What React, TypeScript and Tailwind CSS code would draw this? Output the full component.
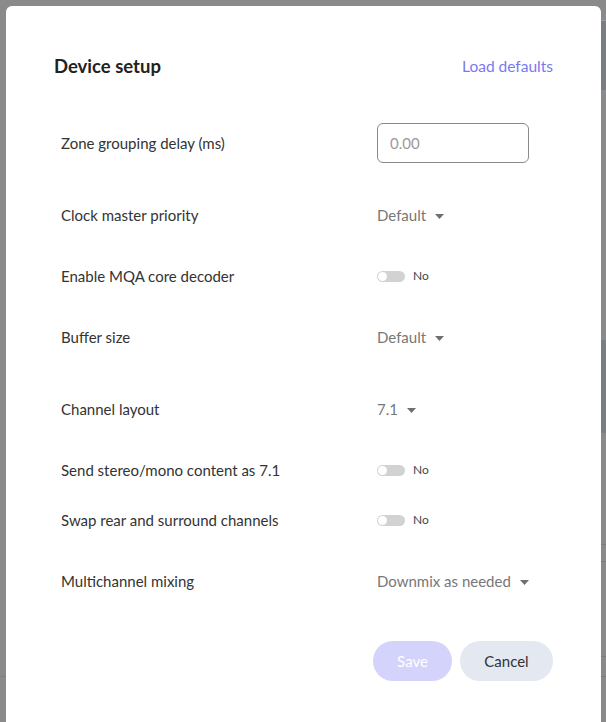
import React from "react";

type Row =
  | { kind: "input"; label: string; value: string }
  | { kind: "select"; label: string; value: string }
  | { kind: "toggle"; label: string; value: string };

const rows: Row[] = [
  { kind: "input", label: "Zone grouping delay (ms)", value: "0.00" },
  { kind: "select", label: "Clock master priority", value: "Default" },
  { kind: "toggle", label: "Enable MQA core decoder", value: "No" },
  { kind: "select", label: "Buffer size", value: "Default" },
  { kind: "select", label: "Channel layout", value: "7.1" },
  { kind: "toggle", label: "Send stereo/mono content as 7.1", value: "No" },
  { kind: "toggle", label: "Swap rear and surround channels", value: "No" },
  { kind: "select", label: "Multichannel mixing", value: "Downmix as needed" },
];

const Caret = () => (
  <svg width="9" height="5" viewBox="0 0 9 5" className="ml-[9px] mt-[2px]">
    <path d="M0 0h9L4.5 5z" fill="#6f6f6f" />
  </svg>
);

const Toggle = ({ label }: { label: string }) => (
  <div className="flex items-center">
    <div className="relative h-[11px] w-[28px] rounded-full bg-[#d2d2d2]">
      <span className="absolute left-[1px] top-[1px] h-[9px] w-[9px] rounded-full bg-white" />
    </div>
    <span className="ml-[8px] text-[12px] text-[#444]">{label}</span>
  </div>
);

const Control = ({ row }: { row: Row }) => {
  if (row.kind === "input") {
    return (
      <div className="flex h-[40px] w-[152px] items-center rounded-[6px] border border-[#8a8a8a] pl-[12px] text-[15px] text-[#9a9a9a]">
        {row.value}
      </div>
    );
  }
  if (row.kind === "toggle") return <Toggle label={row.value} />;
  return (
    <div className="flex items-center text-[15px] text-[#777]">
      {row.value}
      <Caret />
    </div>
  );
};

export default function App() {
  return (
    <div
      className="flex h-[722px] w-[606px] overflow-hidden bg-[#8a8a8a]"
      style={{ fontFamily: "Lato, 'Noto Sans', sans-serif" }}
    >
      {/* left gutter of the page behind the overlay */}
      <div className="flex w-[6px] flex-col">
        <div className="h-[676px]" />
        <div className="h-px bg-[#7e7e7e]" />
      </div>

      {/* Dialog */}
      <div className="mt-[6px] flex w-[595px] flex-col rounded-t-[6px] bg-white px-[48px]">
        <div className="mt-[41px] flex h-[40px] items-center justify-between">
          <h2 className="text-[18.5px] font-bold text-[#222]">Device setup</h2>
          <button className="text-[15.5px] text-[#7a78f2]">Load defaults</button>
        </div>

        <div className="mt-[20px] flex flex-col pl-[7px]">
          {rows.map((row) => (
            <div
              key={row.label}
              className={`flex items-center ${row.kind === "toggle" ? "h-[50px]" : "h-[72px]"}`}
            >
              <div className="w-[316px] text-[15px] text-[#333]">{row.label}</div>
              <Control row={row} />
            </div>
          ))}
        </div>

        <div className="mt-[24px] flex justify-end gap-[8px]">
          <button className="h-[40px] w-[79px] rounded-full bg-[#d4d3fc] text-[15px] text-white">
            Save
          </button>
          <button className="h-[40px] w-[93px] rounded-full bg-[#e4e8f1] text-[15px] text-[#333]">
            Cancel
          </button>
        </div>
      </div>

      {/* right gutter */}
      <div className="flex w-[5px] flex-col">
        <div className="h-[20px]" />
        <div className="h-px bg-[#9a9a9a]" />
        <div className="h-[69px] bg-[#7a7d82]" />
        <div className="h-[250px]" />
        <div className="h-[93px] bg-[#7a7d82]" />
        <div className="h-[111px]" />
        <div className="h-px bg-[#7c7c7c]" />
        <div className="h-[16px]" />
        <div className="h-px bg-[#7c7c7c]" />
        <div className="h-[94px]" />
        <div className="h-px bg-[#7c7c7c]" />
        <div className="h-[19px]" />
        <div className="h-px bg-[#7c7c7c]" />
      </div>
    </div>
  );
}
